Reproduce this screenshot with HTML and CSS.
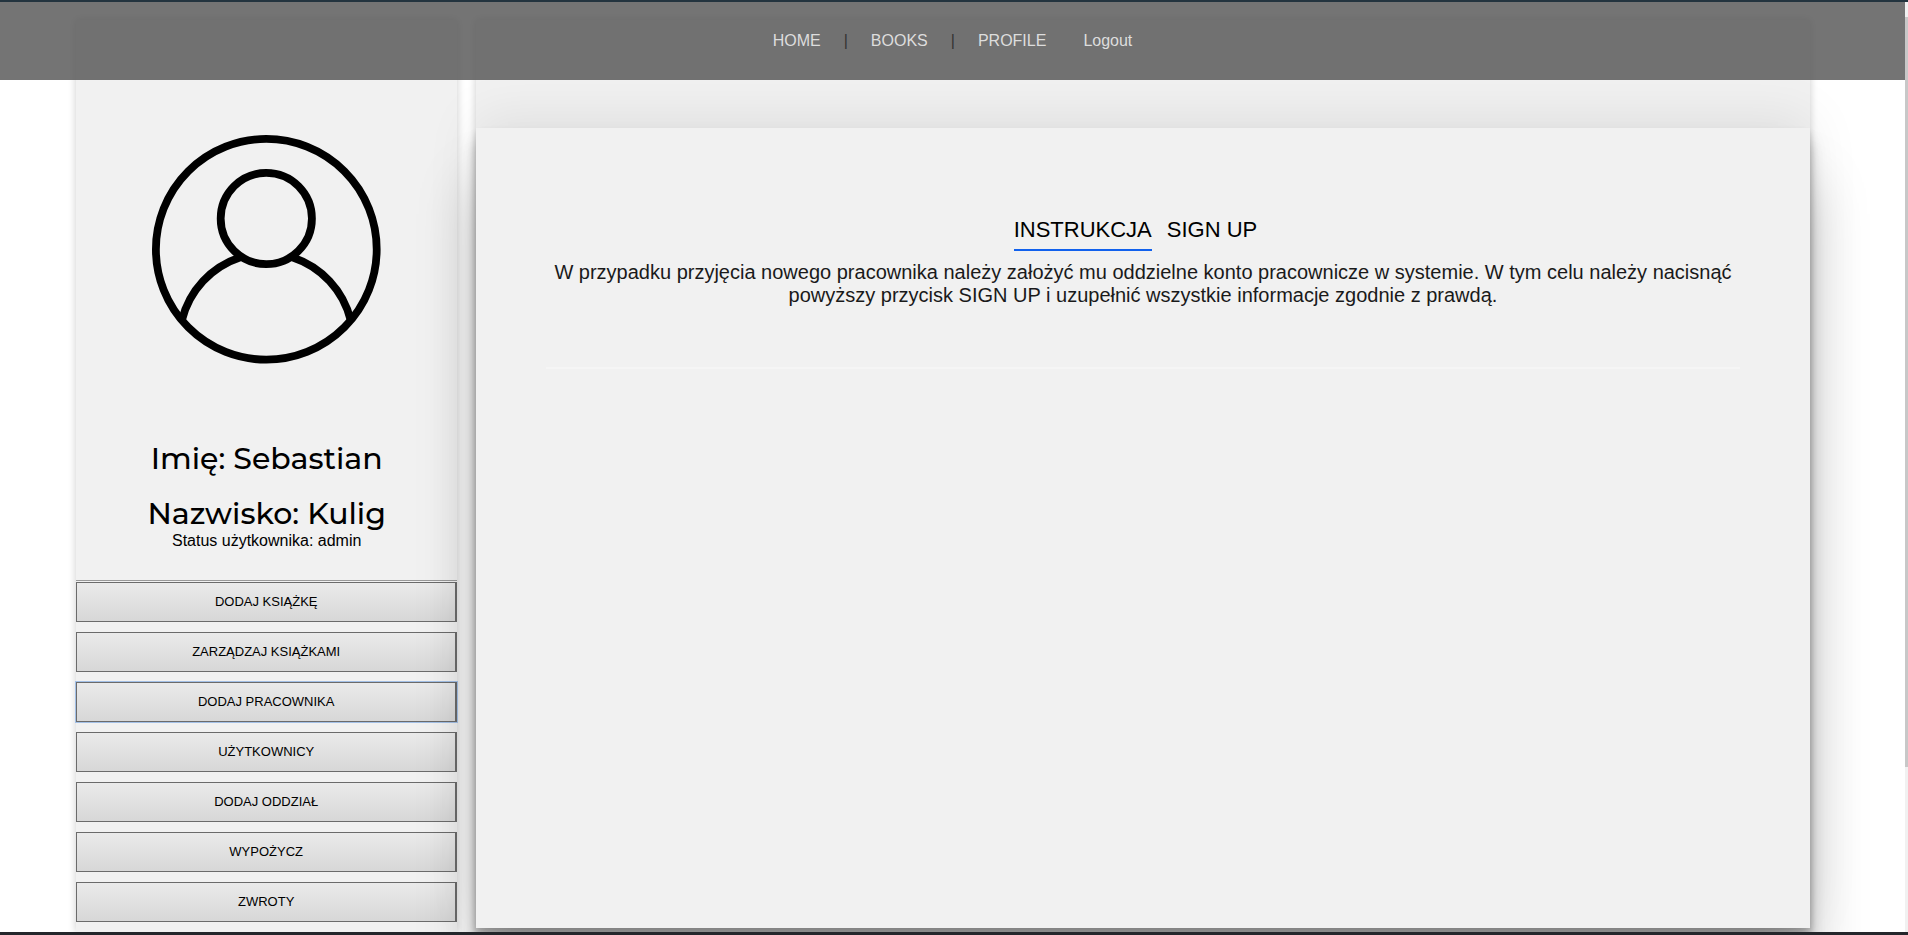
FILE: index.html
```html
<!DOCTYPE html>
<html lang="pl">
<head>
<meta charset="utf-8">
<title>Panel pracownika</title>
<link rel="stylesheet" href="styles.css">
</head>
<body>
<div class="page">
  <header class="topbar">
    <nav class="nav">
      <a href="#">HOME</a>
      <span class="sep">|</span>
      <a href="#">BOOKS</a>
      <span class="sep">|</span>
      <a href="#">PROFILE</a>
      <a class="logout" href="#">Logout</a>
    </nav>
  </header>
  <div class="columns">
    <aside class="sidebar">
      <svg class="avatar" viewBox="0 0 229 229" fill="none" stroke="#000" stroke-width="7.8" role="img" aria-label="Avatar">
        <circle cx="114.5" cy="114.5" r="110.6"/>
        <circle cx="114.5" cy="83.7" r="45.7"/>
        <path d="M30 185.500A88.500 88.500 0 0 1 88.500 122.500M199 185.500A88.500 88.500 0 0 0 140.500 122.500"/>
      </svg>
      <h2 class="name">Imię: Sebastian</h2>
      <h2 class="name">Nazwisko: Kulig</h2>
      <p class="status">Status użytkownika: admin</p>
      <div class="menu">
        <button type="button">DODAJ KSIĄŻKĘ</button>
        <button type="button">ZARZĄDZAJ KSIĄŻKAMI</button>
        <button type="button" class="current">DODAJ PRACOWNIKA</button>
        <button type="button">UŻYTKOWNICY</button>
        <button type="button">DODAJ ODDZIAŁ</button>
        <button type="button">WYPOŻYCZ</button>
        <button type="button">ZWROTY</button>
      </div>
    </aside>
    <main class="content">
      <section class="panel">
        <div class="tabs">
          <button type="button" class="tab active">INSTRUKCJA</button>
          <button type="button" class="tab">SIGN UP</button>
        </div>
        <p class="text">W przypadku przyjęcia nowego pracownika należy założyć mu oddzielne konto pracownicze w systemie. W tym celu należy nacisnąć powyższy przycisk SIGN UP i uzupełnić wszystkie informacje zgodnie z prawdą.</p>
        <hr class="rule">
      </section>
    </main>
  </div>
</div>
<div class="scrollbar"><div class="thumb"></div></div>
</body>
</html>
```
FILE: styles.css
```css
* {
  box-sizing: border-box;
}

body {
  margin: 0;
  height: 100vh;
  display: flex;
  overflow: hidden;
  border-top: 2px solid #23343f;
  border-bottom: 3px solid #24262b;
  background: #fff;
  color: #000;
  font-family: "Liberation Sans", Arial, sans-serif;
  font-size: 16px;
}

.page {
  flex: 1;
  min-width: 0;
  display: flex;
  flex-direction: column;
  position: relative;
  overflow: hidden;
}

/* The translucent bar lies over the tops of both columns. */
.topbar {
  position: absolute;
  top: 0;
  left: 0;
  right: 0;
  z-index: 2;
  height: 78px;
  padding-top: 30px;
  background: rgba(81, 81, 81, 0.8);
}

.nav {
  display: flex;
  justify-content: center;
  line-height: 18px;
}

.nav a {
  color: #ddd;
  text-decoration: none;
}

.sep {
  padding: 0 23px;
  color: #333;
}

.nav .logout {
  margin-left: 37px;
}

.columns {
  flex: 1;
  min-height: 0;
  display: grid;
  grid-template-columns: 20fr 70fr;
  column-gap: 19px;
  padding: 18px 5% 0 4%;
}

.columns,
.sidebar,
.content {
  min-width: 0;
}

.sidebar,
.content {
  background: #f1f1f1;
  box-shadow: 0 0 8px rgba(0, 0, 0, 0.2);
}

.sidebar {
  display: flex;
  flex-direction: column;
  align-items: center;
  padding-top: 115px;
}

.avatar {
  width: 60%;
  margin-bottom: 67px;
}

.name {
  margin: 0;
  padding: 9px 0;
  font-family: Montserrat, Inter, sans-serif;
  font-size: 30px;
  font-weight: 500;
  line-height: 37px;
}

.status {
  margin: -9px 0 30px;
  line-height: 18px;
}

.menu {
  width: 100%;
  display: flex;
  flex-direction: column;
  gap: 10px;
  padding-top: 1px;
  border-top: 1px solid #999;
}

.menu button {
  height: 40px;
  padding: 0;
  border: 1px solid #6b6b6b;
  border-right-width: 2px;
  background: linear-gradient(#eaeaea, #d7d7d7);
  color: #000;
  font-family: inherit;
  font-size: 13px;
}

.menu .current {
  box-shadow: 0 0 0 1px #a3c0e6;
}

.content {
  display: flex;
  padding: 108px 0 4px;
}

.panel {
  position: relative;
  flex: 1;
  padding: 89px 70px 0;
  background: #f1f1f1;
  text-align: center;
  box-shadow:
    rgba(0, 0, 0, 0.22) 0 54px 55px,
    rgba(0, 0, 0, 0.08) 0 -10px 50px,
    rgba(0, 0, 0, 0.1) 0 4px 6px,
    rgba(0, 0, 0, 0.22) 0 14px 14px;
}

.tabs {
  display: flex;
  justify-content: center;
}

.tab {
  margin-right: 15px;
  padding: 0 0 7px;
  border: 0;
  border-bottom: 2px solid transparent;
  background: none;
  color: #000;
  font-family: inherit;
  font-size: 22px;
  line-height: 25px;
}

.tab.active {
  border-color: #1161ed;
}

.text {
  margin: 10px 0 60px;
  color: #1a1a1a;
  font-size: 20px;
  line-height: 23px;
}

.rule {
  height: 2px;
  margin: 0;
  border: 0;
  background: #f5f5f5;
}

.scrollbar {
  width: 3px;
  padding-top: 15px;
  background: #f1f1f1;
}

.thumb {
  height: 82%;
  background: #c8c8c8;
}
```
